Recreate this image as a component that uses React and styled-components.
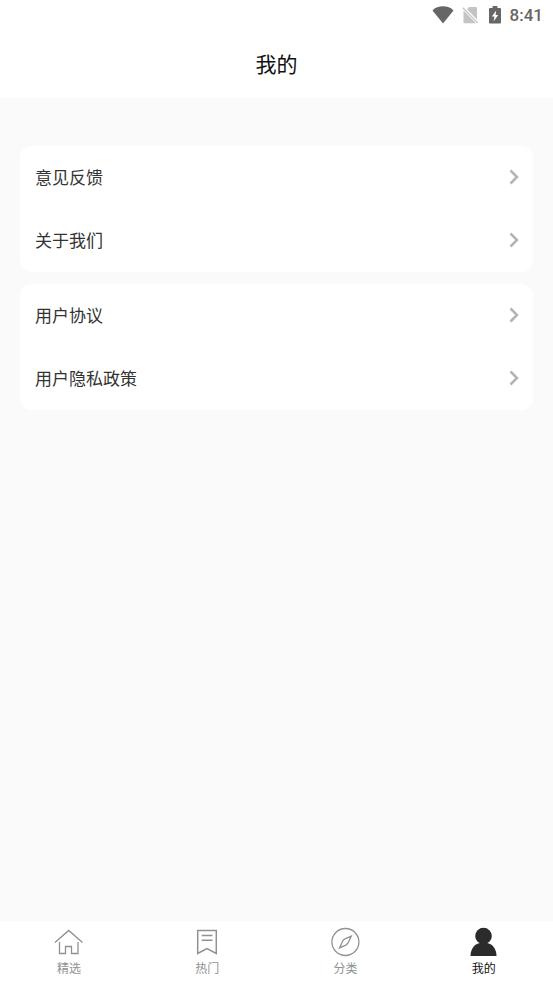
import React, { useState } from 'react';
import styled, { createGlobalStyle } from 'styled-components';

const GlobalStyle = createGlobalStyle`
  :root {
    --clr-bg: #fafafa;
    --clr-surface: #ffffff;
    --clr-title: #111111;
    --clr-text: #333333;
    --clr-muted: #919191;
    --clr-arrow: #b4b4b4;
    --clr-status: #666666;
  }

  * {
    box-sizing: border-box;
  }

  body {
    margin: 0;
    background: var(--clr-bg);
    font-family: 'Noto Sans CJK SC', sans-serif;
  }
`;

const Page = styled.div`
  min-height: 100vh;
  display: flex;
  flex-direction: column;
`;

const Header = styled.header`
  background: var(--clr-surface);
`;

const StatusBar = styled.div`
  height: 30px;
  padding: 0 10px;
  display: flex;
  justify-content: flex-end;
  align-items: center;
  gap: 8px;
  color: var(--clr-status);
`;

const Time = styled.span`
  font-family: Roboto, sans-serif;
  font-size: 17px;
  font-weight: 500;
  line-height: 20px;
`;

const Title = styled.h1`
  margin: 0;
  padding: 18px 0 20px;
  color: var(--clr-title);
  font-size: 21px;
  font-weight: 400;
  line-height: 30px;
  text-align: center;
`;

const Content = styled.main`
  flex: 1;
  padding: 48px 20px;
  display: flex;
  flex-direction: column;
  gap: 12px;
`;

const Card = styled.nav`
  background: var(--clr-surface);
  border-radius: 12px;
`;

const Row = styled.a`
  height: 63px;
  padding: 0 14px 1px 15px;
  display: flex;
  justify-content: space-between;
  align-items: center;
  color: var(--clr-text);
  font-size: 17px;
  line-height: 24px;
  text-decoration: none;
`;

const TabBar = styled.nav`
  position: sticky;
  bottom: 0;
  display: grid;
  grid-template-columns: repeat(4, 1fr);
  background: var(--clr-surface);
`;

const Tab = styled.button`
  height: 62px;
  padding: 6px 0;
  display: flex;
  flex-direction: column;
  align-items: center;
  gap: 2px;
  border: 0;
  background: none;
  color: ${({ $active }) => ($active ? 'var(--clr-title)' : 'var(--clr-muted)')};
  font-family: inherit;
  font-size: 12px;
  line-height: 18px;
  cursor: pointer;
`;

const WifiIcon = () => (
  <svg width="22" height="18" viewBox="0 0 22 18" aria-hidden="true">
    <path d="M11 17.500.5 4.400C3 1.600 7 .3 11 .3s8 1.300 10.500 4.100z" fill="currentColor" />
  </svg>
);

const NoSimIcon = () => (
  <svg width="18" height="18" viewBox="0 0 18 18" aria-hidden="true">
    <path d="M5 3.2 7 1h7q1 0 1 1v11.400z" fill="#c4c4c4" />
    <path d="M1.500 4.400 14 17.300H2.500q-1 0-1-1z" fill="#c4c4c4" />
    <path d="M.8 1.700 15.600 16.900" stroke="#c4c4c4" strokeWidth="1.3" />
  </svg>
);

const BatteryIcon = () => (
  <svg width="14" height="18" viewBox="-1 0 14 18" aria-hidden="true">
    <path
      d="M3.600 0h4.800v2H11q1 0 1 1v13.500q0 1-1 1H1q-1 0-1-1V3q0-1 1-1h2.600z"
      fill="currentColor"
    />
    <path d="M7.200 4.400 2.900 10.500H5.400L4.700 15.200 9.200 8.900H6.600z" fill="#fff" />
  </svg>
);

const ArrowIcon = () => (
  <svg width="10" height="16" viewBox="0 0 10 16" aria-hidden="true">
    <path
      d="M1.5 1.5 8 8l-6.5 6.5"
      fill="none"
      stroke="var(--clr-arrow)"
      strokeWidth="2.5"
    />
  </svg>
);

const TabIcon = ({ children }) => (
  <svg
    width="30"
    height="30"
    viewBox="0 0 30 30"
    fill="none"
    stroke="currentColor"
    strokeWidth="1.3"
    aria-hidden="true"
  >
    {children}
  </svg>
);

const HomeIcon = () => (
  <TabIcon>
    <path d="M.9 15.500 14.700 3.400l13.800 12.100" />
    <path d="M5.500 15v11.500h6v-7h6v7h6.500V15" />
  </TabIcon>
);

const BookmarkIcon = () => (
  <TabIcon>
    <path d="M5.700 3.600h18.600v22.800L15 21.600l-9.300 4.800z" strokeWidth="1.5" />
    <path d="M9.700 8.600h10.800M9.700 13.200h10.800" strokeWidth="1.5" />
  </TabIcon>
);

const CompassIcon = () => (
  <TabIcon>
    <circle cx="14.400" cy="15" r="13.500" />
    <path d="M20.300 9.100 14 11.900Q11.800 13 11 15.400L8.500 20.900 14.800 18.100Q16.900 17 17.800 14.600z" />
  </TabIcon>
);

const PersonIcon = () => (
  <TabIcon>
    <g fill="#2b2b2b" stroke="none">
      <circle cx="14.500" cy="9" r="8.300" />
      <path d="M1.500 29c0-7.500 4.500-12.500 9.500-13h7c5 .5 9.500 5.500 9.500 13z" />
    </g>
  </TabIcon>
);

const groups = [
  ['意见反馈', '关于我们'],
  ['用户协议', '用户隐私政策'],
];

const tabs = [
  { label: '精选', Icon: HomeIcon },
  { label: '热门', Icon: BookmarkIcon },
  { label: '分类', Icon: CompassIcon },
  { label: '我的', Icon: PersonIcon },
];

const App = () => {
  const [active, setActive] = useState('我的');

  return (
    <Page>
      <GlobalStyle />
      <Header>
        <StatusBar>
          <WifiIcon />
          <NoSimIcon />
          <BatteryIcon />
          <Time>8:41</Time>
        </StatusBar>
        <Title>我的</Title>
      </Header>
      <Content>
        {groups.map((rows) => (
          <Card key={rows[0]}>
            {rows.map((label) => (
              <Row key={label} href="#">
                {label}
                <ArrowIcon />
              </Row>
            ))}
          </Card>
        ))}
      </Content>
      <TabBar>
        {tabs.map(({ label, Icon }) => (
          <Tab
            key={label}
            type="button"
            $active={label === active}
            onClick={() => setActive(label)}
          >
            <Icon />
            {label}
          </Tab>
        ))}
      </TabBar>
    </Page>
  );
};

export default App;
